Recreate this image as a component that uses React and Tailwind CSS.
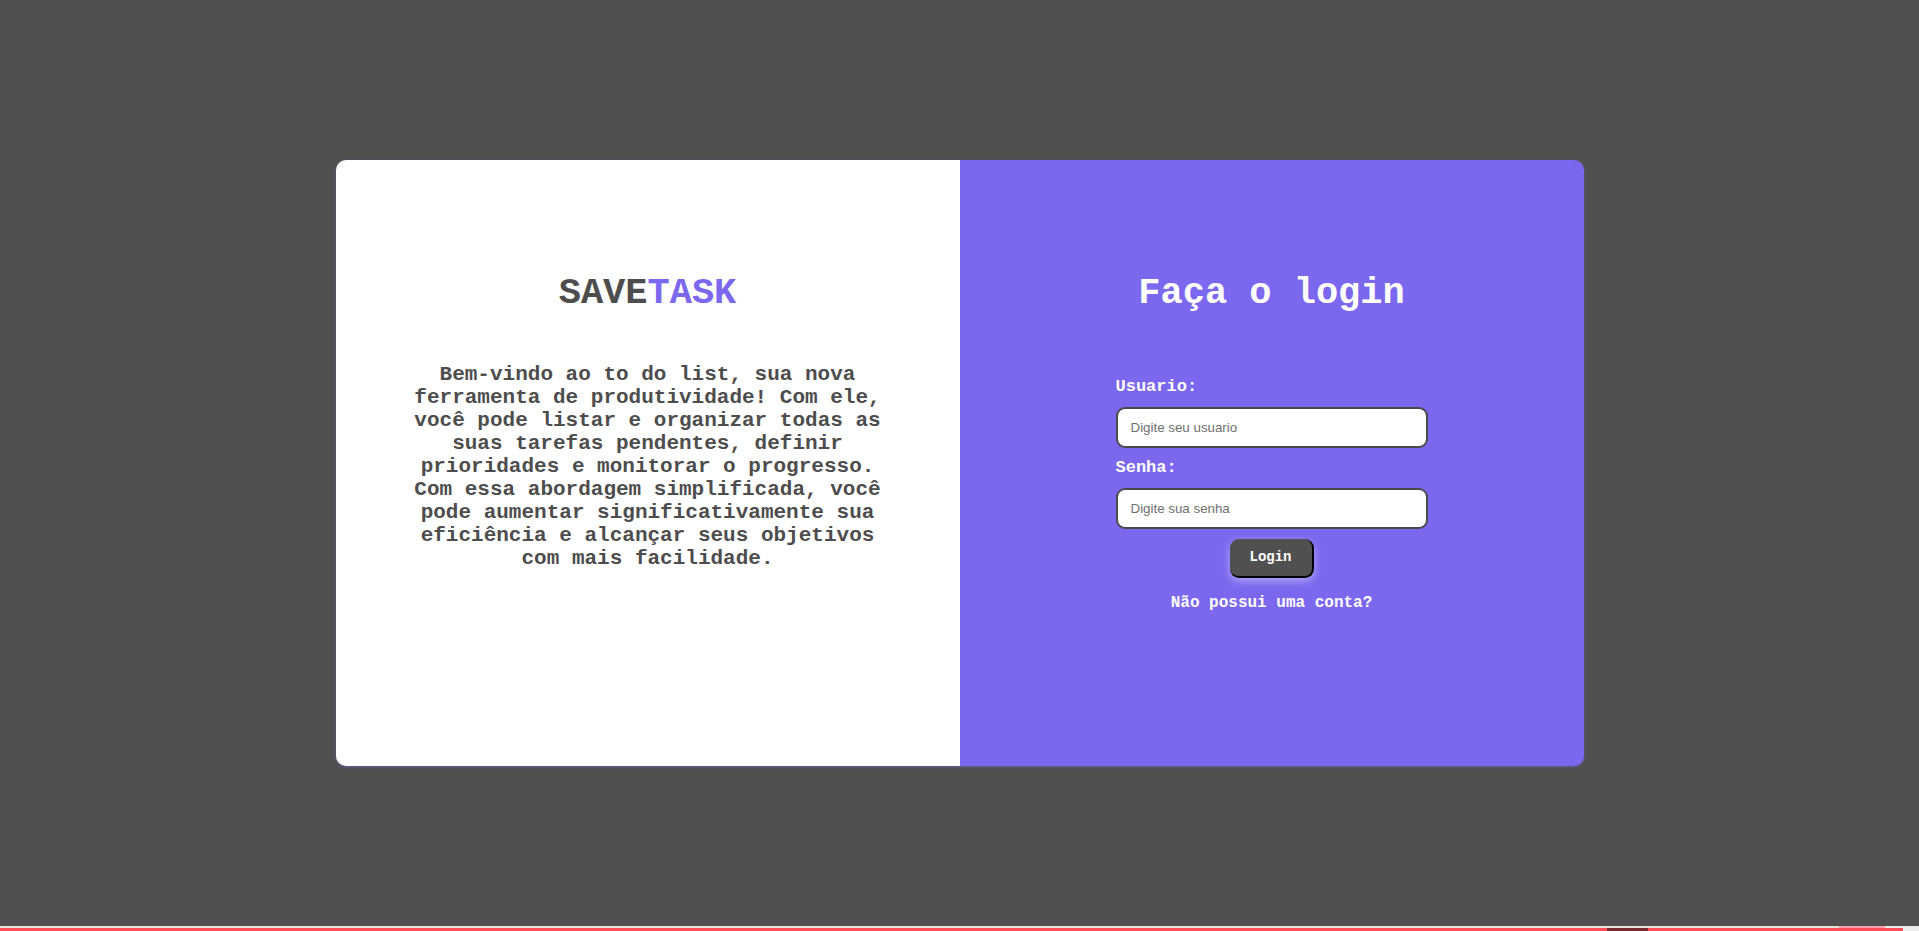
import React from 'react';

const mono = { fontFamily: '"Liberation Mono", "Courier New", monospace' };

const Field = ({ label, placeholder, type = 'text', first }) => (
    <div className={first ? '' : 'mt-[10px]'}>
        <label className="block text-[17px] leading-[20px] font-bold text-white">{label}</label>
        <input
            type={type}
            placeholder={placeholder}
            style={{ fontFamily: '"Liberation Sans", Arial, sans-serif' }}
            className="mt-[10px] block w-[312px] h-[41px] px-[13px] bg-white border-2 border-[#4a4a4a] rounded-[9px] text-[13.33px] text-[#222] placeholder:text-[#6f6f6f] outline-none"
        />
    </div>
);

const App = () => {
    return (
        <div className="bg-[#505050] min-h-screen flex flex-col" style={mono}>
            <div className="h-[926px] flex items-center justify-center">
                <div className="w-[1248px] h-[606px] flex rounded-[10px] overflow-hidden shadow-[0_1px_3px_rgba(123,104,238,0.5)]">
                    {/* Left: brand + intro */}
                    <div className="w-1/2 bg-white flex flex-col items-center pt-[114px] text-[#4d4d4d]">
                        <h1 className="text-[37px] leading-[38px] font-bold">
                            SAVE<span className="text-[#7b68ee]">TASK</span>
                        </h1>
                        <p className="mt-[51px] w-[480px] text-center text-[21px] leading-[23px] font-bold">
                            Bem-vindo ao to do list, sua nova ferramenta de produtividade! Com ele, você pode listar e organizar todas as suas tarefas pendentes, definir prioridades e monitorar o progresso. Com essa abordagem simplificada, você pode aumentar significativamente sua eficiência e alcançar seus objetivos com mais facilidade.
                        </p>
                    </div>

                    {/* Right: login form */}
                    <div className="w-1/2 bg-[#7b68ee] flex flex-col items-center pt-[114px]">
                        <h2 className="text-[37px] leading-[38px] font-bold text-white">Faça o login</h2>
                        <form className="mt-[65px] flex flex-col" onSubmit={(e) => e.preventDefault()}>
                            <Field first label="Usuario:" placeholder="Digite seu usuario" />
                            <Field label="Senha:" placeholder="Digite sua senha" type="password" />
                            <button
                                type="submit"
                                style={mono}
                                className="mt-[10px] mx-auto w-[84px] h-[39px] bg-[#505050] text-white text-[14px] font-bold rounded-[9px] border-r-2 border-b-2 border-black shadow-[0_3px_8px_rgba(225,220,255,0.55)]"
                            >
                                Login
                            </button>
                            <a href="#" className="mt-[16px] text-center text-white text-[16px] leading-[18px] font-bold">
                                Não possui uma conta?
                            </a>
                        </form>
                    </div>
                </div>
            </div>

            {/* bottom edge strip */}
            <div className="h-[2px] flex">
                <div className="w-[1839px] bg-[#e6e4dc]" />
                <div className="w-[46px] bg-[#f4a3aa]" />
                <div className="flex-1 bg-[#ececec]" />
            </div>
            <div className="h-[3px] flex">
                <div className="w-[1607px] bg-[#ff4d5a]" />
                <div className="w-[41px] bg-[#7a2a32]" />
                <div className="w-[255px] bg-[#ff4d5a]" />
                <div className="flex-1 bg-[#ececec]" />
            </div>
        </div>
    );
};

export default App;
